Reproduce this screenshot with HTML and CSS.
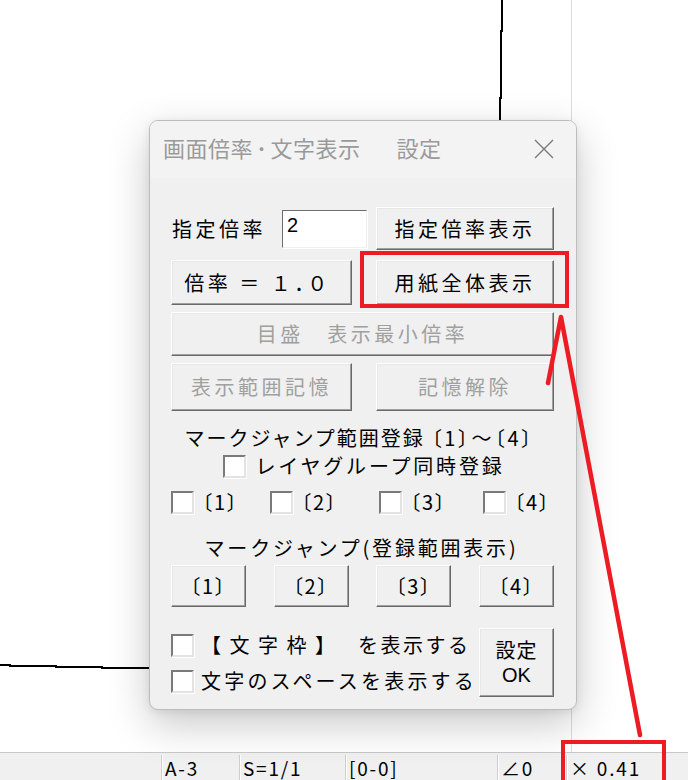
FILE: index.html
```html
<!DOCTYPE html>
<html lang="ja">
<head>
<meta charset="utf-8">
<title>画面倍率・文字表示 設定</title>
<link rel="stylesheet" href="styles.css">
</head>
<body>
<div class="app">
  <div class="workspace">
    <div class="drawing"></div>
    <div class="sidepane"></div>
    <svg class="strokes" width="571" height="752" viewBox="0 0 571 752">
      <polyline points="502,0 502,31 501,31 501,98 500,98 500,120" fill="none" stroke="#000" stroke-width="1.4" shape-rendering="crispEdges"/>
      <polyline points="0,665 10,665 10,666 56,666 56,667 102,667 102,668 149,668" fill="none" stroke="#000" stroke-width="1.4" shape-rendering="crispEdges"/>
    </svg>

    <div class="dialog">
      <div class="titlebar">
        <span class="title">画面倍率<span class="tdot">･</span>文字表示<span class="tgap">　</span>設定</span>
        <svg class="close" width="20" height="20" viewBox="0 0 20 20">
          <path d="M1 1 L19 19 M19 1 L1 19" stroke="#7a7a7a" stroke-width="1.4" fill="none"/>
        </svg>
      </div>
      <div class="body">
        <div class="row row1">
          <span class="lbl">指定倍率</span>
          <div class="input">2</div>
          <button class="btn w-right">指定倍率表示</button>
        </div>
        <div class="grid2 row2">
          <button class="btn zoomval">倍率 ＝ １<span class="ndot">．</span>０</button>
          <button class="btn">用紙全体表示</button>
        </div>
        <div class="row3">
          <button class="btn disabled full">目盛　表示最小倍率</button>
        </div>
        <div class="grid2 row4">
          <button class="btn disabled">表示範囲記憶</button>
          <button class="btn disabled">記憶解除</button>
        </div>
        <div class="caption cap1">マークジャンプ範囲登録 <span class="brk">〔1〕～〔4〕</span></div>
        <div class="checkline layer">
          <span class="cb"></span><span class="cbtext">レイヤグループ同時登録</span>
        </div>
        <div class="checks4">
          <div class="ck"><span class="cb"></span><span class="cbtext">〔1〕</span></div>
          <div class="ck"><span class="cb"></span><span class="cbtext">〔2〕</span></div>
          <div class="ck"><span class="cb"></span><span class="cbtext">〔3〕</span></div>
          <div class="ck"><span class="cb"></span><span class="cbtext">〔4〕</span></div>
        </div>
        <div class="caption cap2">マークジャンプ(登録範囲表示)</div>
        <div class="jumps">
          <button class="btn jb">〔1〕</button>
          <button class="btn jb">〔2〕</button>
          <button class="btn jb">〔3〕</button>
          <button class="btn jb">〔4〕</button>
        </div>
        <div class="bottom">
          <div class="bchecks">
            <div class="bck"><span class="cb"></span><span class="cbtext"><span class="waku">【 文 字 枠 】</span><span class="wgap">　</span>を表示する</span></div>
            <div class="bck"><span class="cb"></span><span class="cbtext wide">文字のスペースを表示する</span></div>
          </div>
          <button class="btn okbtn"><span class="oktop">設定</span><span class="ok">OK</span></button>
        </div>
      </div>
    </div>
  </div>

  <div class="statusbar">
    <div class="sp sp0"></div>
    <div class="sp sp1">A-3</div>
    <div class="sp sp2">S=1/1</div>
    <div class="sp sp3">[0-0]</div>
    <div class="sp sp4">∠0</div>
    <div class="sp sp5">× 0.41</div>
  </div>

  <svg class="annot" width="688" height="780" viewBox="0 0 688 780">
    <rect x="362" y="253" width="205" height="53" fill="none" stroke="#ed1c24" stroke-width="4"/>
    <rect x="563" y="742" width="101" height="50" fill="none" stroke="#ed1c24" stroke-width="4"/>
    <path d="M640 735 L561 317 L548 383" fill="none" stroke="#ed1c24" stroke-width="4.5" stroke-linecap="round" stroke-linejoin="round"/>
  </svg>
</div>
</body>
</html>
```

FILE: styles.css
```css
html, body {
  margin: 0;
  padding: 0;
}
body {
  width: 688px;
  height: 780px;
  overflow: hidden;
  background: #ffffff;
  font-family: "Noto Sans CJK JP", "Noto Sans", sans-serif;
  color: #000;
}
.app {
  position: relative;
  width: 688px;
  height: 780px;
  display: flex;
  flex-direction: column;
}
.workspace {
  position: relative;
  flex: 1;
  display: flex;
}
.drawing {
  width: 571px;
  border-right: 1px solid #dcdcdc;
  background: #fff;
}
.sidepane {
  flex: 1;
  background: #fff;
}
.strokes {
  position: absolute;
  left: 0;
  top: 0;
}

/* dialog */
.dialog {
  position: absolute;
  left: 149px;
  top: 120px;
  width: 428px;
  height: 590px;
  box-sizing: border-box;
  border: 1px solid #bcbcbc;
  border-radius: 9px;
  background: #f0f0f0;
  box-shadow: 0 14px 42px rgba(0, 0, 0, 0.22), 0 2px 8px rgba(0, 0, 0, 0.08);
  display: flex;
  flex-direction: column;
  overflow: hidden;
}
.titlebar {
  height: 57px;
  flex: none;
  background: #f3f3f3;
  display: flex;
  align-items: center;
  padding: 0 22px 0 13px;
}
.title {
  font-size: 22px;
  color: #9a9a9a;
  letter-spacing: 0.5px;
  flex: 1;
  padding-bottom: 6px;
  white-space: nowrap;
}
.tdot {
  padding-left: 3px;
  letter-spacing: 3.5px;
}
.tgap {
  letter-spacing: 14px;
}
.close {
  flex: none;
  margin-bottom: 2px;
}
.body {
  flex: 1;
  padding: 29px 22px 0 21px;
  display: flex;
  flex-direction: column;
}

.btn {
  font-family: "Noto Sans CJK JP", sans-serif;
  font-size: 20px;
  letter-spacing: 3.5px;
  color: #000;
  background: #f0f0f0;
  box-sizing: border-box;
  border: 1px solid;
  border-color: #ffffff #696969 #696969 #ffffff;
  box-shadow: inset -1px -1px 0 #a0a0a0, inset 1px 1px 0 #e8e8e8;
  padding: 0;
  margin: 0;
  line-height: 1;
  display: flex;
  align-items: center;
  justify-content: center;
  white-space: nowrap;
}
.btn.disabled {
  color: #a0a0a0;
}
.zoomval {
  padding-right: 8px;
}
.ndot {
  letter-spacing: -7px;
}

.row1 {
  display: flex;
  align-items: center;
  height: 43px;
}
.lbl {
  width: 110px;
  font-size: 20px;
  letter-spacing: 3.5px;
  padding-left: 1px;
}
.input {
  width: 85px;
  height: 38px;
  box-sizing: border-box;
  background: #fff;
  border: 1px solid;
  border-color: #6d6d6d #f0f0f0 #f0f0f0 #6d6d6d;
  box-shadow: 1px 1px 0 #ffffff;
  font-size: 20px;
  line-height: 1;
  padding: 4px 0 0 4px;
  font-family: "Liberation Sans", sans-serif;
}
.w-right {
  margin-left: auto;
  width: 178px;
  height: 43px;
}
.grid2 {
  display: grid;
  grid-template-columns: 181px 178px;
  column-gap: 24px;
}
.row2 {
  margin-top: 10px;
  height: 45px;
}
.row3 {
  margin-top: 7px;
  height: 44px;
  display: flex;
}
.full {
  flex: 1;
}
.row4 {
  margin-top: 7px;
  height: 48px;
}

.caption {
  font-size: 20px;
  letter-spacing: 2px;
  text-align: center;
  line-height: 24px;
  height: 24px;
  white-space: nowrap;
}
.brk {
  font-feature-settings: "palt";
  letter-spacing: 3px;
}
.cap1 {
  margin-top: 15px;
  padding-right: 6px;
}
.cb {
  flex: none;
  width: 23px;
  height: 23px;
  box-sizing: border-box;
  background: #fff;
  border: 2px solid;
  border-color: #7a7a7a #e3e3e3 #e3e3e3 #7a7a7a;
  box-shadow: 1px 1px 0 #ffffff;
}
.cbtext {
  font-size: 20px;
  letter-spacing: 2.5px;
  line-height: 24px;
  white-space: nowrap;
}
.checkline {
  display: flex;
  align-items: center;
  justify-content: center;
  margin-top: 4px;
  height: 24px;
  gap: 10px;
  padding-left: 2px;
}
.checkline .cbtext {
  letter-spacing: 2.8px;
}
.checks4 {
  margin-top: 12px;
  height: 24px;
  display: grid;
  grid-template-columns: 99px 109px 104px 1fr;
}
.ck {
  display: flex;
  align-items: center;
  gap: 8px;
}
.ck .cbtext {
  letter-spacing: 2px;
  font-feature-settings: "palt";
}
.cap2 {
  margin-top: 22px;
  letter-spacing: 2.8px;
  padding-right: 2px;
}
.jumps {
  margin-top: 5px;
  height: 42px;
  display: flex;
  justify-content: space-between;
}
.jb {
  width: 75px;
  height: 42px;
  font-feature-settings: "palt";
  letter-spacing: 2px;
}
.bottom {
  margin-top: 21px;
  height: 69px;
  display: flex;
  align-items: stretch;
}
.bchecks {
  width: 300px;
  overflow: hidden;
  display: flex;
  flex-direction: column;
  justify-content: space-between;
  padding: 5px 0 4px;
}
.bck {
  display: flex;
  align-items: center;
  gap: 7px;
  height: 24px;
}
.waku {
  letter-spacing: 1px;
  word-spacing: 2px;
}
.wgap {
  letter-spacing: 12px;
}
.cbtext.wide {
  letter-spacing: 3.2px;
}
.okbtn {
  margin-left: auto;
  width: 75px;
  height: 69px;
  flex-direction: column;
  letter-spacing: 1px;
  text-align: center;
  padding-bottom: 2px;
  gap: 6px;
}
.oktop {
  display: block;
  line-height: 20px;
}
.ok {
  display: block;
  font-family: "Liberation Sans", sans-serif;
  font-size: 20px;
  line-height: 18px;
  letter-spacing: 0;
}

/* status bar */
.statusbar {
  height: 27px;
  flex: none;
  border-top: 1px solid #c9c9c9;
  background: #f0f0f0;
  display: flex;
  font-size: 19px;
  letter-spacing: 1.8px;
  line-height: 20px;
}
.sp {
  box-sizing: border-box;
  padding: 3px 0 0 3px;
  white-space: nowrap;
}
.sp1, .sp2, .sp3, .sp4, .sp5 {
  border-left: 1px solid #cfcfcf;
  margin-top: 2px;
  box-shadow: inset 1px 0 0 #ffffff;
}
.sp0 { width: 161px; }
.sp1 { width: 78px; }
.sp2 { width: 106px; }
.sp3 { width: 152px; }
.sp4 { width: 69px; }
.sp5 { flex: 1; }

.annot {
  position: absolute;
  left: 0;
  top: 0;
  pointer-events: none;
}
```
